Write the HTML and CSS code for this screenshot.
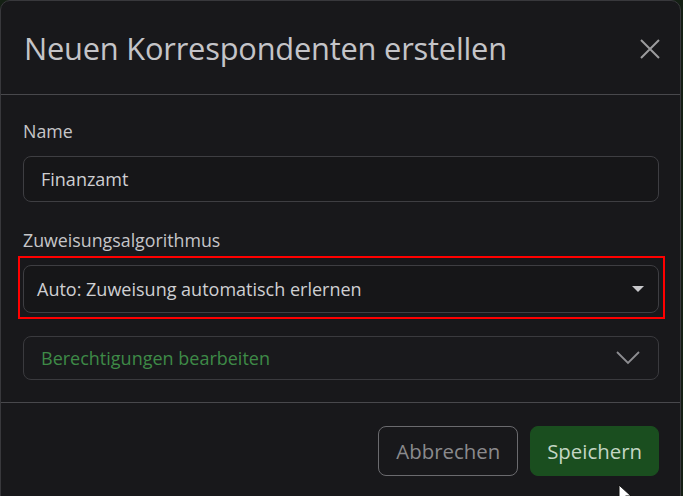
FILE: index.html
```html
<!DOCTYPE html>
<html lang="de">
<head>
    <meta charset="UTF-8">
    <meta name="viewport" content="width=device-width, initial-scale=1.0">
    <title>Neuen Korrespondenten erstellen</title>
    <link rel="stylesheet" href="styles.css">
</head>
<body>
    <div class="modal">
        <div class="modal-header">
            <h4 class="modal-title">Neuen Korrespondenten erstellen</h4>
            <button type="button" class="btn-close" aria-label="Schließen">
                <svg width="22" height="22" viewBox="0 0 22 22">
                    <path d="M2 2 L20 20 M20 2 L2 20" stroke="#9b9b9e" stroke-width="2" fill="none"/>
                </svg>
            </button>
        </div>

        <div class="modal-body">
            <label for="name" class="form-label">Name</label>
            <input type="text" id="name" class="form-control" value="Finanzamt">

            <label for="algo" class="form-label second">Zuweisungsalgorithmus</label>
            <div class="highlight">
                <div class="form-select" id="algo">
                    <span>Auto: Zuweisung automatisch erlernen</span>
                    <svg width="12" height="7" viewBox="0 0 12 7"><path d="M0 0 L12 0 L6 6 Z" fill="#c8c8cb"/></svg>
                </div>
            </div>

            <div class="accordion">
                <span>Berechtigungen bearbeiten</span>
                <svg width="24" height="14" viewBox="0 0 24 14">
                    <path d="M1 1 L12 12 L23 1" stroke="#8d8d91" stroke-width="1.8" fill="none"/>
                </svg>
            </div>
        </div>

        <div class="modal-footer">
            <button type="button" class="btn btn-outline">Abbrechen</button>
            <button type="button" class="btn btn-primary">Speichern</button>
        </div>
    </div>

    <svg class="cursor" width="14" height="20" viewBox="0 0 14 20">
        <path d="M1 1 L1 17 L5 13 L8 19 L10.5 18 L7.5 12 L13 12 Z" fill="#ffffff" stroke="#111" stroke-width="1"/>
    </svg>
</body>
</html>
```

FILE: styles.css
```css
body {
    margin: 0;
    background-color: #142014;
    font-family: "Open Sans", "Noto Sans", sans-serif;
    color: #c9c9cc;
    overflow: hidden;
    height: 496px;
    position: relative;
}

.modal {
    width: 681px;
    height: 520px;
    background-color: #18181b;
    border: 1px solid #38383c;
    border-radius: 10px;
    box-sizing: border-box;
}

.modal-header {
    height: 93px;
    padding: 0 19px 0 23px;
    display: flex;
    align-items: center;
    justify-content: space-between;
    border-bottom: 1px solid #48484c;
}

.modal-title {
    margin: 0;
    font-size: 30.8px;
    font-weight: 400;
    color: #c4c4c8;
    letter-spacing: -0.2px;
}

.btn-close {
    background: none;
    border: none;
    padding: 0;
    width: 22px;
    height: 22px;
    margin-top: 2px;
}

.modal-body {
    padding: 23px 21px 22px 22px;
}

.form-label {
    display: block;
    font-size: 17.8px;
    line-height: 26px;
    margin-bottom: 12px;
    color: #c6c6c9;
}

.form-label.second {
    margin-top: 25px;
    margin-bottom: 3px;
}

.form-control {
    display: block;
    width: 100%;
    height: 46px;
    box-sizing: border-box;
    padding: 0 17px;
    font-family: inherit;
    font-size: 18px;
    color: #cfcfd2;
    background-color: #161618;
    border: 1px solid #3e3e42;
    border-radius: 8px;
}

.highlight {
    border: 2px solid #ff0000;
    padding: 7px 4px 4px 3px;
    margin: 0 -6px 0 -5px;
}

.form-select {
    height: 48px;
    box-sizing: border-box;
    padding: 0 14px 0 13px;
    display: flex;
    align-items: center;
    justify-content: space-between;
    font-size: 18px;
    color: #cfcfd2;
    background-color: #161618;
    border: 1px solid #3e3e42;
    border-radius: 8px;
}

.accordion {
    margin-top: 17px;
    height: 44px;
    box-sizing: border-box;
    padding: 0 18px 0 17px;
    display: flex;
    align-items: center;
    justify-content: space-between;
    font-size: 18px;
    color: #3e8a47;
    background-color: #19191c;
    border: 1px solid #3a3a3e;
    border-radius: 8px;
}

.modal-footer {
    border-top: 1px solid #48484c;
    padding: 23px 21px 0 0;
    display: flex;
    justify-content: flex-end;
    gap: 12px;
}

.btn {
    height: 50px;
    padding: 0 17px;
    font-family: inherit;
    font-size: 20.4px;
    border-radius: 8px;
}

.btn-outline {
    background: none;
    color: #8a8a8d;
    border: 1px solid #6a6a6e;
}

.btn-primary {
    padding: 0 16px;
    background-color: #1a4e1f;
    color: #c4d6c5;
    border: 1px solid #1a4e1f;
}

.cursor {
    position: absolute;
    left: 618px;
    top: 484px;
}
```
